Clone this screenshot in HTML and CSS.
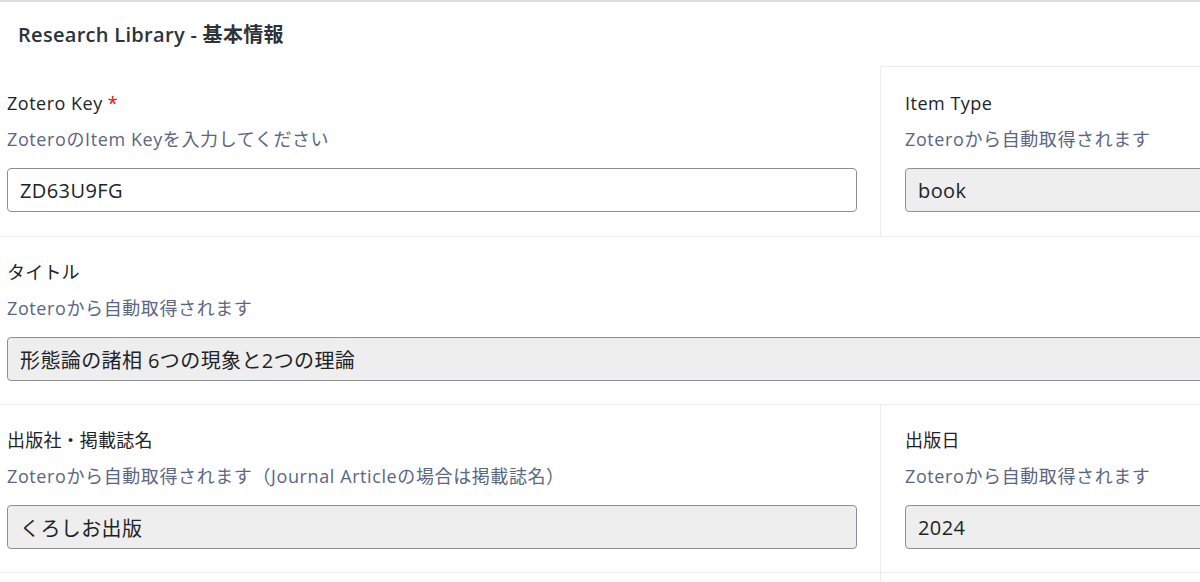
FILE: index.html
```html
<!DOCTYPE html>
<html lang="ja">
<head>
    <meta charset="UTF-8">
    <meta name="viewport" content="width=device-width, initial-scale=1.0">
    <title>Research Library - 基本情報</title>
    <link rel="stylesheet" href="styles.css">
</head>
<body>
    <div class="postbox">
        <h2 class="postbox-title">Research Library - 基本情報</h2>

        <div class="fields">
            <!-- 1行目 -->
            <div class="field field-wide field-first">
                <label class="field-label" for="zoteroKey">Zotero Key <span class="required">*</span></label>
                <p class="field-desc">ZoteroのItem Keyを入力してください</p>
                <input class="field-input" id="zoteroKey" type="text" value="ZD63U9FG">
            </div>
            <div class="field field-side field-first">
                <label class="field-label">Item Type</label>
                <p class="field-desc">Zoteroから自動取得されます</p>
                <input class="field-input is-readonly" type="text" value="book" readonly>
            </div>

            <!-- タイトル -->
            <div class="field field-full">
                <label class="field-label label-ja">タイトル</label>
                <p class="field-desc">Zoteroから自動取得されます</p>
                <input class="field-input is-readonly" type="text" value="形態論の諸相 6つの現象と2つの理論" readonly>
            </div>

            <!-- 出版情報 -->
            <div class="field field-wide">
                <label class="field-label label-ja">出版社・掲載誌名</label>
                <p class="field-desc">Zoteroから自動取得されます（Journal Articleの場合は掲載誌名）</p>
                <input class="field-input is-readonly" type="text" value="くろしお出版" readonly>
            </div>
            <div class="field field-side">
                <label class="field-label label-ja">出版日</label>
                <p class="field-desc">Zoteroから自動取得されます</p>
                <input class="field-input is-readonly" type="text" value="2024" readonly>
            </div>

            <!-- 次の行（画面外に続く） -->
            <div class="field field-wide field-empty"></div>
            <div class="field field-side field-empty"></div>
        </div>
    </div>
</body>
</html>
```

FILE: styles.css
```css
body {
    margin: 0;
    overflow: hidden;
    background: #fff;
    font-family: "Open Sans", "Noto Sans CJK JP", sans-serif;
    color: #1d2327;
}

.postbox {
    width: 1466px;
    border-top: 2px solid #dcdcde;
    background: #fff;
}

.postbox-title {
    margin: 0;
    padding: 20px 18px 18px;
    font-size: 20px;
    line-height: 26px;
    font-weight: 600;
    letter-spacing: 0.3px;
    color: #2c3338;
}

.fields {
    display: flex;
    flex-wrap: wrap;
}

.field {
    box-sizing: border-box;
    padding: 23px 24px 23px 24px;
    border-top: 1px solid #ececf0;
}

.field-first {
    padding-top: 24px;
    padding-bottom: 24px;
}

.field-first.field-wide {
    border-top: none;
    margin-top: 1px;
}

.field-wide {
    flex: 0 0 880px;
    padding-left: 7px;
    padding-right: 23px;
}

.field-side {
    flex: 1;
    border-left: 1px solid #ececf0;
}

.field-full {
    flex: 0 0 100%;
    padding-left: 7px;
}

.field-empty {
    height: 160px;
}

.field-label {
    display: block;
    font-size: 18px;
    line-height: 24px;
    font-weight: 500;
    letter-spacing: 0.5px;
    color: #1d2327;
    margin-bottom: 12px;
}

.label-ja {
    font-weight: 400;
    letter-spacing: 0.2px;
}

.required {
    color: #f00;
}

.field-desc {
    margin: 0 0 17px;
    font-size: 18px;
    line-height: 24px;
    letter-spacing: 0.6px;
    color: #5a6683;
}

.field-input {
    display: block;
    box-sizing: border-box;
    width: 100%;
    height: 44px;
    margin: 0;
    padding: 0 12px;
    border: 1px solid #8c8f94;
    border-radius: 4px;
    background: #fff;
    font-family: inherit;
    font-size: 20px;
    letter-spacing: 0.4px;
    color: #1d2327;
}

.is-readonly {
    background: #eeeeee;
}
```
